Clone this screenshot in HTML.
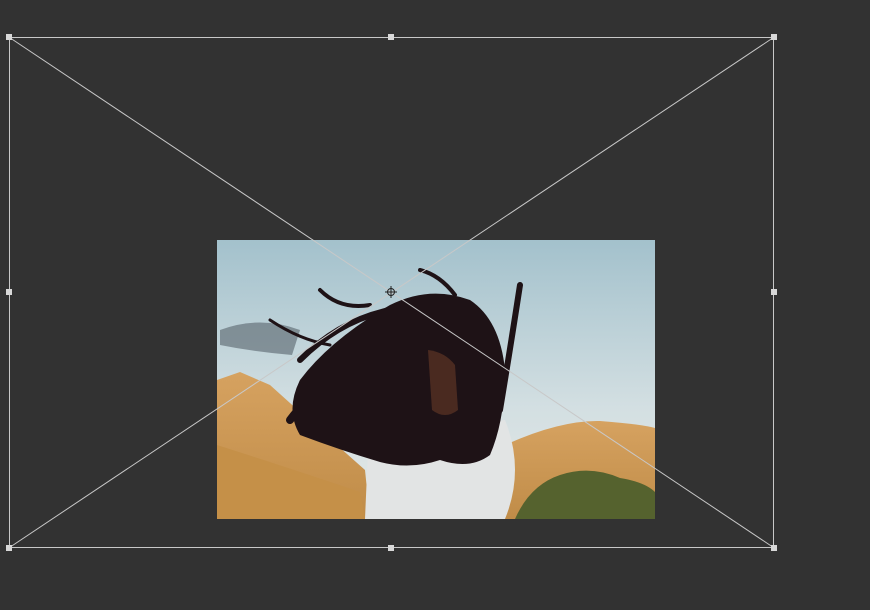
<!DOCTYPE html>
<html><head><meta charset="utf-8"><style>
html,body{margin:0;padding:0;background:#323232;width:870px;height:610px;overflow:hidden}
</style></head><body>
<svg width="870" height="610" viewBox="0 0 870 610" xmlns="http://www.w3.org/2000/svg">
<defs>
<linearGradient id="sky" x1="0" y1="0" x2="0" y2="1">
<stop offset="0" stop-color="#a3c1cc"/><stop offset="0.6" stop-color="#d3dfe2"/><stop offset="1" stop-color="#e4e8e6"/>
</linearGradient>
<linearGradient id="dune" x1="0" y1="0" x2="0" y2="1">
<stop offset="0" stop-color="#d6a260"/><stop offset="1" stop-color="#c08c48"/>
</linearGradient>
<clipPath id="c"><rect x="217" y="240" width="438" height="279"/></clipPath>
</defs>
<rect width="870" height="610" fill="#323232"/>
<g clip-path="url(#c)">
<rect x="217" y="240" width="438" height="279" fill="url(#sky)"/>
<path d="M217 380 L240 372 L270 385 L320 430 L365 470 L370 519 L217 519Z" fill="url(#dune)"/>
<path d="M217 445 Q280 465 360 492 L365 519 L217 519Z" fill="#c59048"/>
<path d="M505 445 Q560 420 600 421 Q640 424 655 428 L655 519 L500 519Z" fill="url(#dune)"/>
<path d="M515 519 Q530 485 560 475 Q590 465 620 478 Q645 482 655 492 L655 519Z" fill="#55622e"/>
<path d="M220 330 Q260 315 300 330 L292 355 Q255 352 220 345Z" fill="#56626a" opacity="0.6"/>
<path d="M368 450 Q420 430 505 420 Q525 470 505 519 L365 519Z" fill="#e2e4e4"/>
<g fill="none" stroke="#1e1216" stroke-linecap="round">
<path d="M300 360 Q340 320 390 310" stroke-width="6"/>
<path d="M320 290 Q340 310 370 305" stroke-width="4"/>
<path d="M290 420 Q320 380 370 360" stroke-width="8"/>
<path d="M500 410 Q510 350 520 285" stroke-width="6"/>
<path d="M270 320 Q300 340 330 345" stroke-width="3"/>
<path d="M420 270 Q440 275 455 295" stroke-width="4"/>
</g>
<path d="M300 380 Q330 340 390 305 Q430 285 470 300 Q500 320 505 370 Q505 420 490 455 Q470 470 440 460 Q410 470 380 462 Q340 450 300 435 Q285 410 300 380Z" fill="#1e1216"/>
<path d="M428 350 Q445 352 455 365 L458 410 Q445 420 432 410Z" fill="#4a2a20"/>
</g>
<g stroke="#c8c8c8" stroke-width="1" fill="none">
<rect x="9.5" y="37.5" width="764" height="510"/>
<line x1="9.5" y1="37.5" x2="773.5" y2="547.5"/>
<line x1="773.5" y1="37.5" x2="9.5" y2="547.5"/>
<circle cx="391" cy="292" r="3.5" stroke="#222"/>
<line x1="385" y1="292" x2="397" y2="292" stroke="#222"/><line x1="391" y1="286" x2="391" y2="298" stroke="#222"/>
</g>
<g fill="#d8d8d8">
<rect x="6" y="34" width="6" height="6"/><rect x="388" y="34" width="6" height="6"/><rect x="771" y="34" width="6" height="6"/>
<rect x="6" y="289" width="6" height="6"/><rect x="771" y="289" width="6" height="6"/>
<rect x="6" y="545" width="6" height="6"/><rect x="388" y="545" width="6" height="6"/><rect x="771" y="545" width="6" height="6"/>
</g>
</svg>
</body></html>
